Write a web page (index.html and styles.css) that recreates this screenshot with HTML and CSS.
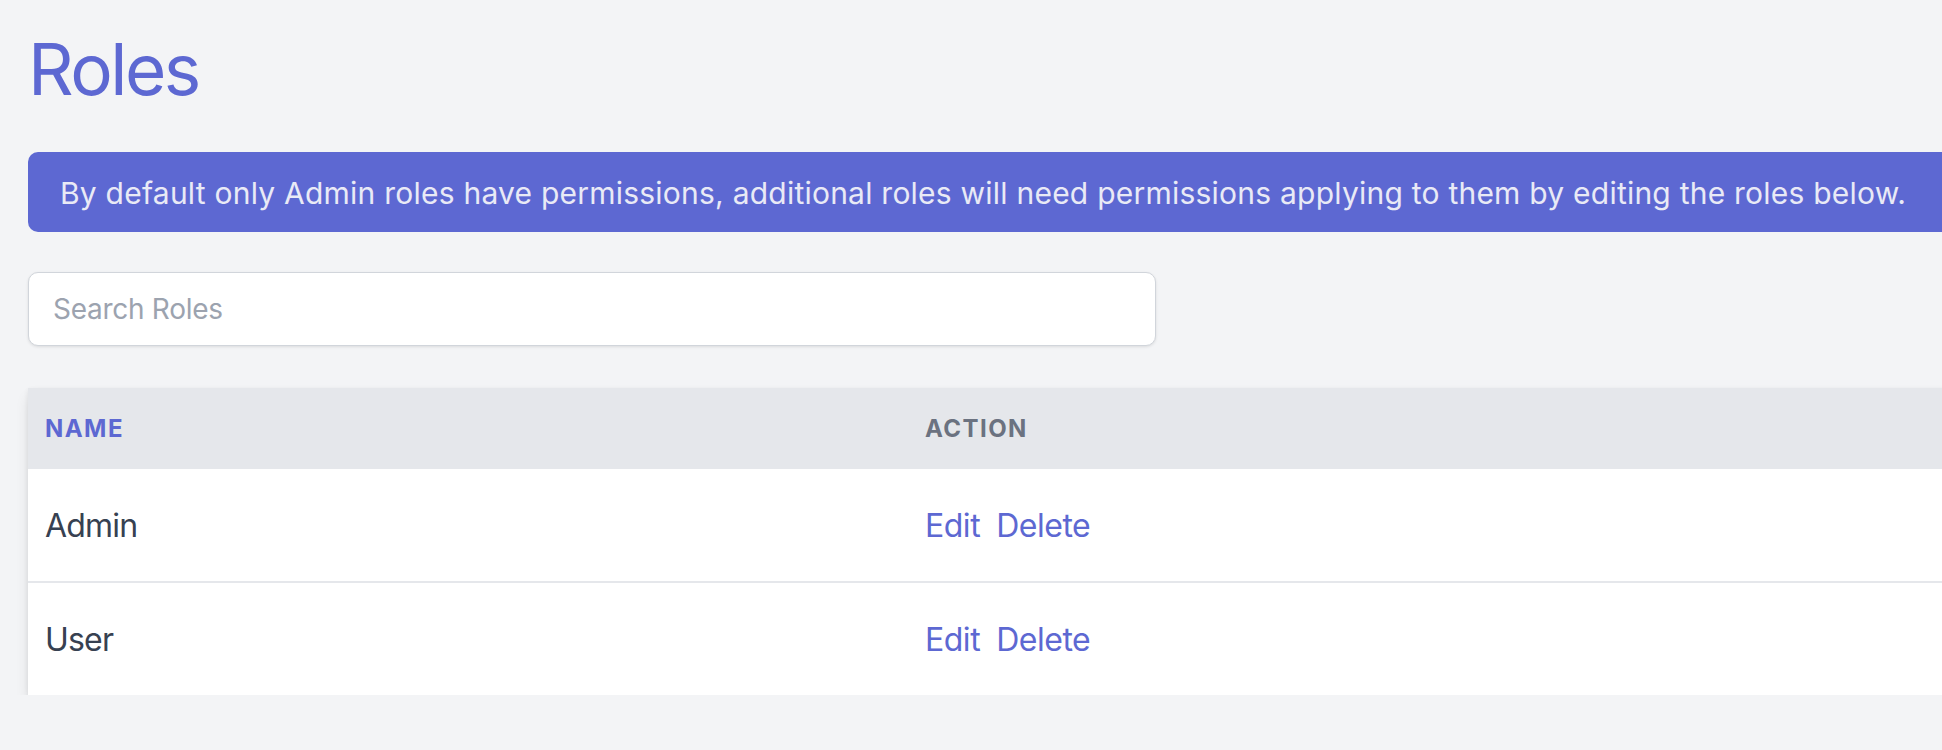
FILE: index.html
```html
<!DOCTYPE html>
<html lang="en">
<head>
<meta charset="utf-8">
<title>Roles</title>
<link rel="stylesheet" href="styles.css">
</head>
<body>
<main class="page">
  <h1 class="title">Roles</h1>
  <div class="notice">By default only Admin roles have permissions, additional roles will need permissions applying to them by editing the roles below.</div>
  <input class="search" type="text" placeholder="Search Roles">
  <table class="roles">
    <thead>
      <tr>
        <th class="col-name sorted">Name</th>
        <th class="col-action">Action</th>
      </tr>
    </thead>
    <tbody>
      <tr>
        <td class="col-name">Admin</td>
        <td class="col-action"><span class="actions"><a href="#" class="link">Edit</a><a href="#" class="link">Delete</a></span></td>
      </tr>
      <tr>
        <td class="col-name">User</td>
        <td class="col-action"><span class="actions"><a href="#" class="link">Edit</a><a href="#" class="link">Delete</a></span></td>
      </tr>
    </tbody>
  </table>
</main>
</body>
</html>
```
FILE: styles.css
```css
html, body {
  margin: 0;
  padding: 0;
  background: #f3f4f6;
  overflow: hidden;
}

body {
  font-family: Inter, "Noto Sans", "Liberation Sans", sans-serif;
  color: #374151;
}

.page {
  width: 2400px;
  padding: 33px 0 0 28px;
  display: flex;
  flex-direction: column;
  align-items: flex-start;
}

.title {
  margin: 0;
  font-size: 71px;
  line-height: 72px;
  font-weight: 400;
  letter-spacing: -0.035em;
  color: #5d68d2;
}

.notice {
  margin-top: 47px;
  align-self: stretch;
  background: #5d68d2;
  color: #e9eaf6;
  font-size: 30px;
  line-height: 40px;
  letter-spacing: 0.23px;
  padding: 21px 32px 19px 32px;
  border-radius: 10px;
  white-space: nowrap;
}

.search {
  margin-top: 40px;
  box-sizing: border-box;
  width: 1128px;
  height: 74px;
  border: 1.5px solid #d1d5db;
  border-radius: 10px;
  background: #fff;
  padding: 0 24px;
  font-family: inherit;
  font-size: 28px;
  letter-spacing: -0.01em;
  color: #374151;
  box-shadow: 0 1px 3px rgba(0, 0, 0, 0.1);
  outline: none;
}

.search::placeholder {
  color: #9ca3af;
}

.roles {
  margin-top: 42px;
  align-self: stretch;
  border-collapse: collapse;
  background: #fff;
  box-shadow: 0 8px 14px -2px rgba(0, 0, 0, 0.12), 0 2px 5px rgba(0, 0, 0, 0.07);
}

.roles th {
  background: #e5e7eb;
  height: 81px;
  padding: 0 17px;
  text-align: left;
  font-size: 24px;
  font-weight: 700;
  letter-spacing: 0.06em;
  text-transform: uppercase;
  color: #6b7280;
}

.roles th.sorted {
  color: #5d68d2;
}

.roles td {
  height: 112px;
  padding: 0 17px;
  font-size: 32px;
  letter-spacing: -0.015em;
  color: #374151;
}

.roles td.col-name {
  letter-spacing: -0.025em;
}

.roles tbody tr + tr td {
  border-top: 2px solid #e5e7eb;
}

.col-name {
  width: 846px;
}

.actions {
  display: flex;
  gap: 16px;
}

.link {
  color: #5d68d2;
  text-decoration: none;
}
```
